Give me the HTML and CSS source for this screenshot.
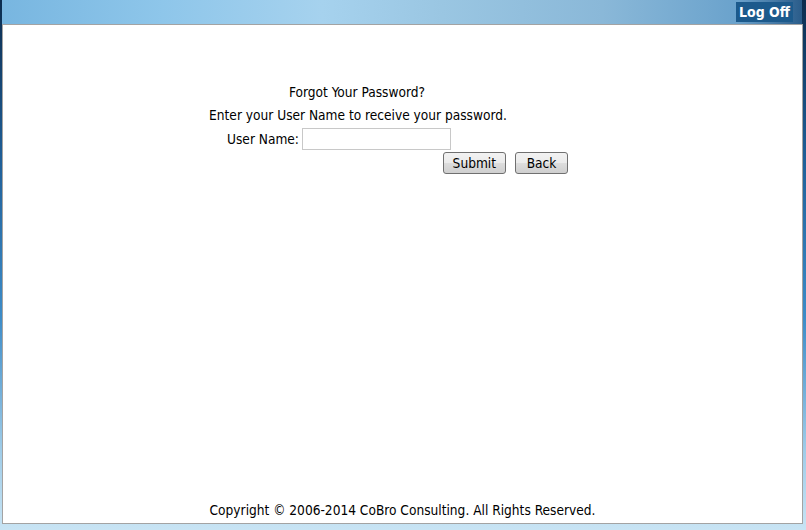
FILE: index.html
```html
<!DOCTYPE html>
<html>
<head>
<meta charset="utf-8">
<title>Forgot Your Password?</title>
<link rel="stylesheet" href="styles.css">
</head>
<body>
<div class="frame">
  <header class="banner">
    <a class="logoff" href="#">Log Off</a>
  </header>
  <main class="panel">
    <div class="form">
      <div class="row title">Forgot Your Password?</div>
      <div class="row intro">Enter your User Name to receive your password.</div>
      <div class="row field">
        <label class="label" for="un">User Name:</label>
        <input class="input" id="un" type="text">
      </div>
      <div class="row actions">
        <button class="btn">Submit</button>
        <button class="btn btn-back">Back</button>
      </div>
    </div>
    <footer class="copy">Copyright © 2006-2014 CoBro Consulting. All Rights Reserved.</footer>
  </main>
</div>
</body>
</html>
```
FILE: styles.css
```css
html, body { margin: 0; padding: 0; }
body {
  width: 806px;
  height: 530px;
  overflow: hidden;
  font-family: "DejaVu Sans Condensed", "DejaVu Sans", Tahoma, sans-serif;
  font-size: 13.6px;
  color: #000;
  background: linear-gradient(to bottom, #0c2c4e 0%, #1f5f98 30%, #3d8cc8 60%, #9fcce8 85%, #c8e4f4 100%);
}
.frame {
  height: 530px;
  display: flex;
  flex-direction: column;
}
.banner {
  height: 24px;
  flex: none;
  margin: 0 4px 0 2px;
  display: flex;
  justify-content: flex-end;
  align-items: flex-start;
  background: linear-gradient(to right, #78b6e0 0%, #8ec6ea 20%, #a6d2ee 40%, #9ac6e2 55%, #8ab8d8 75%, #6aa2cc 92%, #2a5c8a 100%);
}
.logoff {
  margin: 2px 9px 0 0;
  height: 20px;
  padding: 0 3px;
  background: #1c5a8c;
  color: #fff;
  font-family: "DejaVu Sans Condensed", "DejaVu Sans", sans-serif;
  font-weight: bold;
  font-size: 14px;
  line-height: 20px;
  text-decoration: none;
}
.panel {
  flex: none;
  height: 498px;
  margin: 0 3px 0 2px;
  background: #fff;
  border: 1px solid #a3a3a3;
  display: flex;
  flex-direction: column;
}
.form {
  margin: 56px 0 0 205px;
  width: 361px;
}
.row { display: flex; white-space: nowrap; }
.title, .intro {
  width: 300px;
  justify-content: center;
  height: 23px;
  line-height: 23px;
}
.title { margin-left: -1px; }
.field {
  height: 24px;
  align-items: center;
}
.label {
  width: 91px;
  text-align: right;
  margin-right: 3px;
}
.input {
  width: 145px;
  height: 18px;
  padding: 1px;
  margin: 0;
  border: 1px solid #c8c8c8;
  background: #fff;
}
.actions {
  justify-content: flex-end;
  gap: 9px;
  margin-top: 1px;
  padding-right: 1px;
}
.btn {
  height: 22px;
  padding: 0 9px;
  border: 1px solid #707070;
  border-radius: 3px;
  background: linear-gradient(to bottom, #f2f2f2 0%, #ebebeb 50%, #dddddd 51%, #cfcfcf 100%);
  font-family: "DejaVu Sans Condensed", "DejaVu Sans", Tahoma, sans-serif;
  font-size: 13.6px;
  color: #000;
}
.btn-back { min-width: 53px; }
.copy {
  margin-top: auto;
  margin-bottom: 3px;
  text-align: center;
  height: 20px;
  line-height: 20px;
}
```
